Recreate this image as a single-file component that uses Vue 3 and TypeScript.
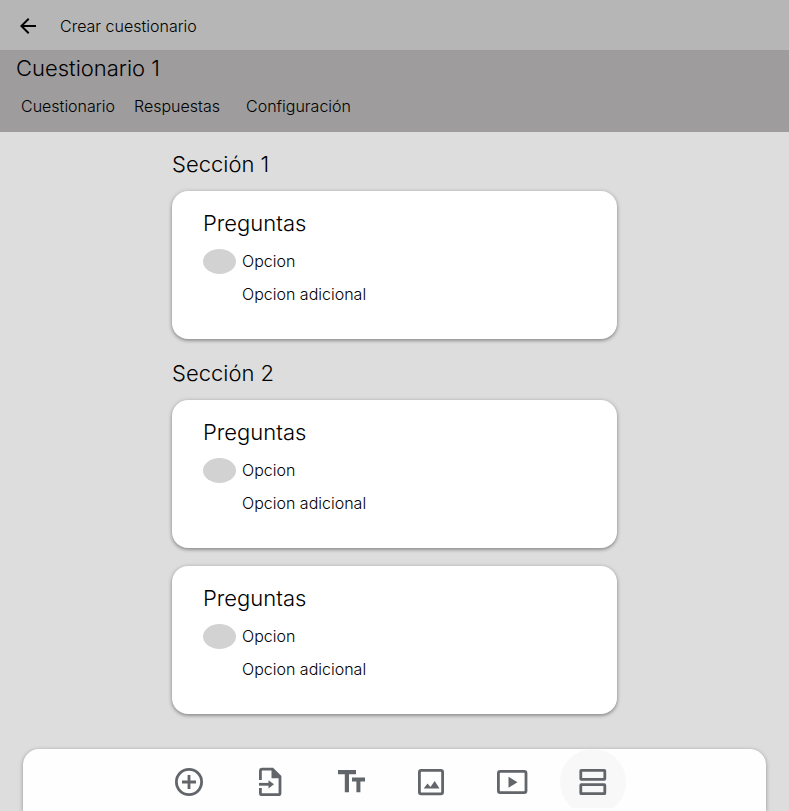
<script setup lang="ts">
interface Section {
  title: string
  questions: string[]
}

const tabs: string[] = ['Cuestionario', 'Respuestas', 'Configuración']
const sections: Section[] = [
  { title: 'Sección 1', questions: ['Preguntas'] },
  { title: 'Sección 2', questions: ['Preguntas', 'Preguntas'] },
]
</script>

<template>
  <div class="page">
    <header class="topbar">
      <svg class="back" viewBox="0 0 24 24"><path d="M20 11H7.83l5.59-5.59L12 4l-8 8 8 8 1.41-1.41L7.83 13H20z" /></svg>
      <span class="label">Crear cuestionario</span>
    </header>
    <div class="form-head">
      <h1 class="heading">Cuestionario 1</h1>
      <nav class="tabs">
        <a v-for="tab in tabs" :key="tab" class="tab">{{ tab }}</a>
      </nav>
    </div>
    <main class="content">
      <section v-for="section in sections" :key="section.title" class="section">
        <h2 class="heading section-title">{{ section.title }}</h2>
        <article v-for="(question, i) in section.questions" :key="i" class="card">
          <h3 class="heading">{{ question }}</h3>
          <div class="option"><span class="bullet"></span><span>Opcion</span></div>
          <div class="option extra"><span>Opcion adicional</span></div>
        </article>
      </section>
    </main>
    <footer class="toolbar">
      <button class="tool" aria-label="Pregunta">
        <svg viewBox="0 0 66 60">
          <circle cx="33" cy="30" r="12.6" class="line" />
          <path d="M33 23v14M26 30h14" class="line" />
        </svg>
      </button>
      <button class="tool" aria-label="Importar">
        <svg viewBox="0 0 66 60">
          <path d="M23.4 28V19q0-1.8 1.8-1.8h10.3l7.5 7.5v16.2q0 1.8-1.8 1.8h-16q-1.8 0-1.8-1.8V36" class="line" />
          <path d="M34.5 17v9.2h9zM31.5 28.2v8.2l5.5-4.1z" class="solid" />
          <path d="M22 32.3h12" class="line" />
        </svg>
      </button>
      <button class="tool" aria-label="Texto">
        <svg viewBox="0 0 66 60">
          <path d="M20 18h18v4.2h-7v18h-4.2v-18H20zM34 25.6h13v4h-4.6v10.6h-4V29.6H34z" class="solid" />
        </svg>
      </button>
      <button class="tool" aria-label="Imagen">
        <svg viewBox="0 0 66 60">
          <rect x="21.4" y="18.4" width="23.2" height="23.4" rx="1.8" class="line" />
          <path d="M25.7 36.4l3.8-5 3 3.5 4.2-6 4.8 7.5z" class="solid" />
        </svg>
      </button>
      <button class="tool" aria-label="Video">
        <svg viewBox="0 0 66 60">
          <rect x="19.4" y="19.4" width="27.6" height="21.2" rx="1.8" class="line" />
          <path d="M29.5 24.7v11l9-5.5z" class="solid" />
        </svg>
      </button>
      <button class="tool active" aria-label="Sección">
        <svg viewBox="0 0 66 60">
          <circle cx="33" cy="30" r="33" class="halo" />
          <rect x="20.8" y="18.3" width="24" height="9" rx=".5" class="line" />
          <rect x="20.8" y="32.7" width="24" height="9" rx=".5" class="line" />
        </svg>
      </button>
    </footer>
  </div>
</template>

<style>
body {
  margin: 0;
}
</style>

<style scoped>
.page {
  box-sizing: border-box;
  height: 811px;
  display: flex;
  flex-direction: column;
  overflow: hidden;
  background: #ddd;
  color: #000;
  font: 300 16px/24px Inter, sans-serif;
}
.topbar {
  box-sizing: border-box;
  height: 50px;
  flex: none;
  display: flex;
  align-items: center;
  gap: 20px;
  padding: 2px 16px 0;
  background: #b6b6b6;
}
.back {
  width: 24px;
  height: 24px;
}
.form-head {
  box-sizing: border-box;
  height: 82px;
  flex: none;
  padding: 4px 16px 0;
  background: #9e9c9d;
}
.heading {
  margin: 0;
  font-size: 22px;
  line-height: 28px;
  font-weight: 300;
}
.tabs {
  display: grid;
  grid-template-columns: 113px 112px auto;
  padding: 12px 5px 0;
}
.content {
  width: 445px;
  margin: 18px auto 0;
  flex: 1;
}
.section + .section {
  margin-top: 20px;
}
.section-title {
  margin-bottom: 13px;
}
.card {
  box-sizing: border-box;
  height: 148px;
  padding: 18px 31px 0;
  border-radius: 16px;
  background: #fff;
  box-shadow: 0 1px 4px rgba(0, 0, 0, .34), 0 2px 3px rgba(0, 0, 0, .12);
}
.card + .card {
  margin-top: 18px;
}
.option {
  display: flex;
  align-items: center;
  gap: 6px;
  height: 33px;
  margin-top: 8px;
}
.option.extra {
  margin-top: 0;
  padding-left: 39px;
}
.option > span:last-child {
  margin-top: -1px;
}
.bullet {
  width: 33px;
  height: 25px;
  border-radius: 50%;
  background: #d2d2d2;
}
.toolbar {
  box-sizing: border-box;
  height: 62px;
  flex: none;
  display: flex;
  align-items: flex-start;
  justify-content: center;
  gap: 14.8px;
  margin: 0 23px;
  padding: 0 7px 0 0;
  border-radius: 16px 16px 0 0;
  background: #fefefe;
  box-shadow: 0 1px 4px rgba(0, 0, 0, .34);
}
.tool {
  width: 66px;
  height: 62px;
  padding: 3px 0 0;
  border: 0;
  background: none;
}
.tool.active {
  height: 59px;
  overflow: hidden;
}
.tool svg {
  display: block;
  width: 66px;
  height: 60px;
  overflow: visible;
}
.line {
  fill: none;
  stroke: #62666a;
  stroke-width: 2.8;
}
.solid {
  fill: #62666a;
}
.halo {
  fill: #f8f8f8;
}
</style>
